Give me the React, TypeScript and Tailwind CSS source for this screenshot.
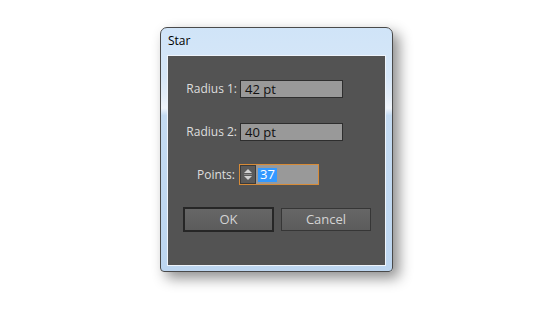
import React from 'react';

const font = { fontFamily: '"Open Sans", "Noto Sans", "DejaVu Sans", sans-serif' };

function Spinner() {
    return (
        <div className="w-[16px] h-[19px] bg-[#5a5a5a] border border-[#3a3a3a] flex items-center justify-center">
            <svg width="12" height="15" viewBox="0 0 12 15">
                <path d="M6 2 L10 6 L2 6 Z" fill="#d0d0d0" />
                <line x1="2" y1="7.5" x2="10" y2="7.5" stroke="#8a8a8a" strokeWidth="1" />
                <path d="M2 9 L10 9 L6 13 Z" fill="#d0d0d0" />
            </svg>
        </div>
    );
}

function Field({ label, value }: { label: string; value: string }) {
    return (
        <div className="flex items-center h-[18px]">
            <div className="w-[69px] text-right text-[12px] text-[#dedede] leading-none">{label}</div>
            <div className="ml-[3px] w-[103px] h-[18px] bg-[#999999] border border-[#2e2e2e] flex items-center pl-[4px] text-[13px] text-[#111] leading-none">
                {value}
            </div>
        </div>
    );
}

export default function App() {
    return (
        <div className="w-[550px] h-[311px] bg-white pl-[160px] pt-[27px]" style={font}>
            <div className="w-[233px] h-[245px] rounded-t-[7px] rounded-b-[4px] border border-[#4a4a4a] bg-[linear-gradient(180deg,#d0e4f8_0%,#d6e7f8_20%,#e3edf8_28%,#f0f5fb_33%,#c4dbf2_36%,#bdd6f0_100%)] shadow-[6px_6px_14px_rgba(0,0,0,0.45)] flex flex-col">
                <div className="h-[27px] shrink-0 flex items-center pl-[7px] pb-[1px] text-[12px] text-black">Star</div>
                <div className="mx-[6px] mb-[5px] flex-1 border border-[#eef4fb] bg-[#535353] flex flex-col pt-[24px]">
                    <Field label="Radius 1:" value="42 pt" />
                    <div className="mt-[25px]">
                        <Field label="Radius 2:" value="40 pt" />
                    </div>
                    <div className="mt-[23px] flex items-center h-[21px]">
                        <div className="w-[67px] text-right text-[12px] text-[#dedede] leading-none">Points:</div>
                        <div className="ml-[4px] w-[80px] h-[21px] border border-[#d78b37] flex">
                            <Spinner />
                            <div className="flex-1 bg-[#999999] flex items-center pl-[2px]">
                                <span className="bg-[#3399ff] text-white text-[13px] leading-[13px] px-[2px] h-[14px] flex items-center">37</span>
                            </div>
                        </div>
                    </div>
                    <div className="mt-[22px] flex items-start pl-[15px] gap-[7px]">
                        <button className="w-[91px] h-[25px] border-2 border-[#262626] bg-[linear-gradient(180deg,#666_0%,#5c5c5c_100%)] text-[13px] text-[#d4d4d4] leading-none">OK</button>
                        <button className="mt-[1px] w-[90px] h-[23px] border border-[#363636] bg-[linear-gradient(180deg,#666_0%,#5c5c5c_100%)] text-[13px] text-[#d4d4d4] leading-none">Cancel</button>
                    </div>
                </div>
            </div>
        </div>
    );
}
